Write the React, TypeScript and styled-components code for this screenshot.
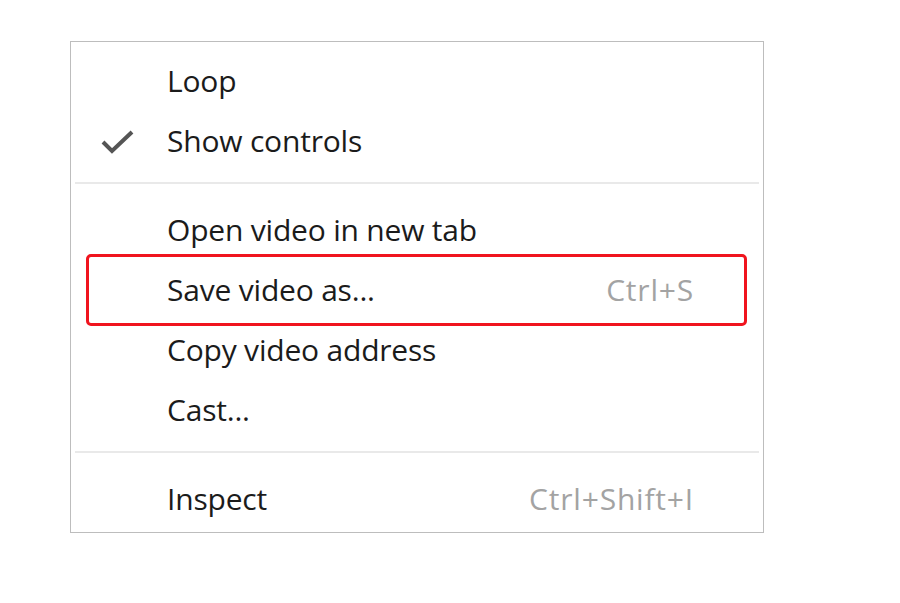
import styled, { createGlobalStyle } from 'styled-components';

const GlobalStyle = createGlobalStyle`
  html, body {
    margin: 0;
    padding: 0;
    background: #fff;
  }
  body {
    font-family: 'Open Sans', 'Noto Sans', sans-serif;
  }
`;

type Item =
  | { kind: 'item'; label: string; shortcut?: string; checked?: boolean; marked?: boolean }
  | { kind: 'sep' };

const menuItems: Item[] = [
  { kind: 'item', label: 'Loop' },
  { kind: 'item', label: 'Show controls', checked: true },
  { kind: 'sep' },
  { kind: 'item', label: 'Open video in new tab' },
  { kind: 'item', label: 'Save video as...', shortcut: 'Ctrl+S', marked: true },
  { kind: 'item', label: 'Copy video address' },
  { kind: 'item', label: 'Cast...' },
  { kind: 'sep' },
  { kind: 'item', label: 'Inspect', shortcut: 'Ctrl+Shift+I' },
];

const CheckIcon = () => (
  <svg width='34' height='26' viewBox='0 0 34 26'>
    <path
      d='M2 13 L11 22 L31 3'
      fill='none'
      stroke='#555'
      strokeWidth='4'
      strokeLinejoin='miter'
    />
  </svg>
);

const App = () => {
  return (
    <Page>
      <GlobalStyle />
      <Menu>
        {menuItems.map((item, i) =>
          item.kind === 'sep' ? (
            <Separator key={i} />
          ) : (
            <Row key={i} $marked={item.marked}>
              <Check>{item.checked && <CheckIcon />}</Check>
              <Label>{item.label}</Label>
              {item.shortcut && <Shortcut>{item.shortcut}</Shortcut>}
            </Row>
          )
        )}
      </Menu>
    </Page>
  );
};

export default App;

const Page = styled.div`
  width: 900px;
  height: 603px;
  padding: 41px 0 0 70px;
  box-sizing: border-box;
`;

const Menu = styled.div`
  width: 694px;
  box-sizing: border-box;
  border: 1px solid #bdbdbd;
  background: #fff;
  padding: 9px 0 3px;
  display: flex;
  flex-direction: column;
`;

const Row = styled.div<{ $marked?: boolean }>`
  position: relative;
  height: 60px;
  display: flex;
  align-items: center;
  padding: 0 69px 0 30px;
  color: #1b1b1b;
  font-size: 30px;
  line-height: 1;

  ${({ $marked }) =>
    $marked &&
    `
    &::after {
      content: '';
      position: absolute;
      left: 15px;
      right: 16px;
      top: -6px;
      bottom: -6px;
      border: 3px solid #f0141e;
      border-radius: 5px;
    }
  `}
`;

const Check = styled.div`
  width: 66px;
  display: flex;
  align-items: center;
  padding-top: 2px;
`;

const Label = styled.span`
  flex: 1;
  letter-spacing: -0.2px;
`;

const Shortcut = styled.span`
  color: #a3a3a3;
  letter-spacing: 0.8px;
`;

const Separator = styled.div`
  height: 2px;
  margin: 11px 4px 16px;
  background: #e9e9e9;
`;
